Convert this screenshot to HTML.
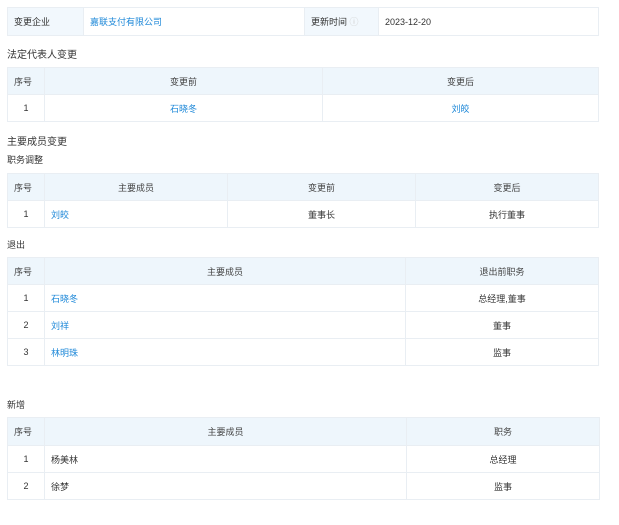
<!DOCTYPE html>
<html><head><meta charset="utf-8"><style>
*{margin:0;padding:0;box-sizing:border-box}
body{width:619px;height:525px;background:#fff;font-family:"Liberation Sans","Noto Sans CJK SC",sans-serif;font-size:9px;color:#333;position:relative;overflow:hidden}
table{position:absolute;left:7px;width:592px;border-collapse:collapse;table-layout:fixed}
td,th{border:1px solid #e9eef3;font-weight:normal;height:27px;text-align:center;padding:0 6px}
th{background:#eef6fc;color:#444}
.l{text-align:left}
a{color:#1e88d8;text-decoration:none}
.t{position:absolute;left:7px;color:#333}
.t1{font-size:10px}
</style></head><body>
<table style="top:7px">
<colgroup><col style="width:76px"><col style="width:221px"><col style="width:74px"><col></colgroup>
<tr><td class="l" style="background:#f2f8fd;height:28px">变更企业</td><td class="l"><a>嘉联支付有限公司</a></td><td class="l" style="background:#f2f8fd">更新时间 <span style="color:#ccc">ⓘ</span></td><td class="l">2023-12-20</td></tr>
</table>
<div class="t t1" style="top:46px">法定代表人变更</div>
<table style="top:67px">
<colgroup><col style="width:37px"><col style="width:278px"><col></colgroup>
<tr><th class="l">序号</th><th>变更前</th><th>变更后</th></tr>
<tr><td>1</td><td><a>石晓冬</a></td><td><a>刘皎</a></td></tr>
</table>
<div class="t t1" style="top:133px">主要成员变更</div>
<div class="t" style="top:153px">职务调整</div>
<table style="top:173px">
<colgroup><col style="width:37px"><col style="width:183px"><col style="width:188px"><col></colgroup>
<tr><th class="l">序号</th><th>主要成员</th><th>变更前</th><th>变更后</th></tr>
<tr><td>1</td><td class="l"><a>刘皎</a></td><td>董事长</td><td>执行董事</td></tr>
</table>
<div class="t" style="top:238px">退出</div>
<table style="top:257px">
<colgroup><col style="width:37px"><col style="width:361px"><col></colgroup>
<tr><th class="l">序号</th><th>主要成员</th><th>退出前职务</th></tr>
<tr><td>1</td><td class="l"><a>石晓冬</a></td><td>总经理,董事</td></tr>
<tr><td>2</td><td class="l"><a>刘祥</a></td><td>董事</td></tr>
<tr><td>3</td><td class="l"><a>林明珠</a></td><td>监事</td></tr>
</table>
<div class="t" style="top:398px">新增</div>
<table style="top:417px;width:593px">
<colgroup><col style="width:37px"><col style="width:362px"><col></colgroup>
<tr><th class="l" style="height:28px">序号</th><th>主要成员</th><th>职务</th></tr>
<tr><td>1</td><td class="l">杨美林</td><td>总经理</td></tr>
<tr><td>2</td><td class="l">徐梦</td><td>监事</td></tr>
</table>
</body></html>
